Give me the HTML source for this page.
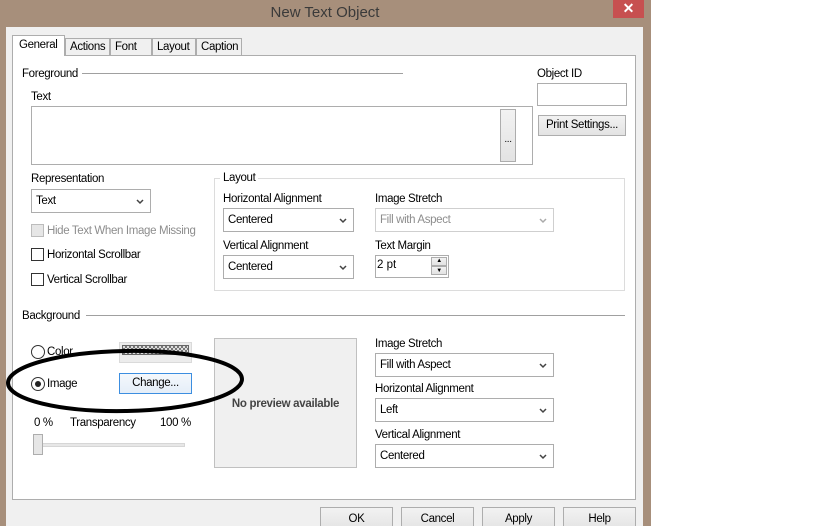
<!DOCTYPE html>
<html><head><meta charset="utf-8"><style>
*{margin:0;padding:0;box-sizing:border-box}
html,body{width:819px;height:526px;overflow:hidden}
body{background:#fff;font-family:"Liberation Sans",sans-serif;font-size:11.5px;color:#000;position:relative}
.a{position:absolute}
.lbl{position:absolute;line-height:14px;white-space:nowrap;letter-spacing:-0.35px}
.cb{position:absolute;background:#fff;border:1px solid #adadad;height:24px;line-height:22px;padding-left:4px;letter-spacing:-0.35px}
.cb svg{position:absolute;right:6px;top:9px}
.btn{position:absolute;background:linear-gradient(#f2f2f2,#e3e3e3);border:1px solid #adadad;text-align:center;line-height:18px;letter-spacing:-0.35px}
.chk{position:absolute;width:13px;height:13px;border:1px solid #333;background:#fff}
.rad{position:absolute;width:14px;height:14px;border:1px solid #333;border-radius:50%;background:#fff}
.tab{position:absolute;top:38px;height:18px;background:#f0f0f0;border:1px solid #adadad;border-bottom:none;line-height:16px;padding-left:4px;letter-spacing:-0.35px}
</style></head><body>
<div class="a" style="left:0;top:0;width:651px;height:526px;background:#a78f7b"></div>
<div class="lbl" style="left:240px;top:4px;width:170px;text-align:center;font-size:15px;line-height:18px;color:#3a3a3a;letter-spacing:0">New Text Object</div>
<div class="a" style="left:613px;top:0;width:31px;height:18px;background:#c75050;color:#fff;text-align:center;font-size:14px;line-height:17px;font-weight:bold">✕</div>
<div class="a" style="left:6px;top:27px;width:637px;height:499px;background:#f0f0f0"></div>
<div class="tab" style="left:65px;width:45px">Actions</div>
<div class="tab" style="left:110px;width:42px">Font</div>
<div class="tab" style="left:152px;width:44px">Layout</div>
<div class="tab" style="left:196px;width:46px">Caption</div>
<div class="a" style="left:12px;top:55px;width:624px;height:445px;background:#fff;border:1px solid #adadad"></div>
<div class="tab" style="left:12px;top:35px;width:53px;height:21px;background:#fff;padding-left:6px;line-height:18px">General</div>
<div class="lbl" style="left:22px;top:67px">Foreground</div>
<div class="a" style="left:82px;top:73px;width:321px;height:1px;background:#a0a0a0"></div>
<div class="lbl" style="left:31px;top:90px">Text</div>
<div class="a" style="left:31px;top:106px;width:502px;height:59px;border:1px solid #adadad;background:#fff"></div>
<div class="btn" style="left:500px;top:109px;width:16px;height:53px;line-height:60px;font-size:10px">...</div>
<div class="lbl" style="left:537px;top:67px">Object ID</div>
<div class="a" style="left:537px;top:83px;width:90px;height:23px;border:1px solid #adadad;background:#fff"></div>
<div class="btn" style="left:538px;top:115px;width:88px;height:21px">Print Settings...</div>
<div class="lbl" style="left:31px;top:172px">Representation</div>
<div class="cb" style="left:31px;top:189px;width:120px">Text<svg width="8" height="6"><path d="M1 1l3 3 3-3" stroke="#444" stroke-width="1.5" fill="none"/></svg></div>
<div class="chk" style="left:31px;top:224px;background:#e6e6e6;border-color:#bcbcbc"></div>
<div class="lbl" style="left:47px;top:224px;color:#8d8d8d">Hide Text When Image Missing</div>
<div class="chk" style="left:31px;top:248px"></div>
<div class="lbl" style="left:47px;top:248px">Horizontal Scrollbar</div>
<div class="chk" style="left:31px;top:273px"></div>
<div class="lbl" style="left:47px;top:273px">Vertical Scrollbar</div>
<div class="a" style="left:214px;top:178px;width:411px;height:113px;border:1px solid #dcdcdc"></div>
<div class="lbl" style="left:220px;top:171px;background:#fff;padding:0 3px">Layout</div>
<div class="lbl" style="left:223px;top:192px">Horizontal Alignment</div>
<div class="cb" style="left:223px;top:208px;width:131px">Centered<svg width="8" height="6"><path d="M1 1l3 3 3-3" stroke="#444" stroke-width="1.5" fill="none"/></svg></div>
<div class="lbl" style="left:375px;top:192px">Image Stretch</div>
<div class="cb" style="left:375px;top:208px;width:179px;border-color:#cfcfcf;color:#8d8d8d">Fill with Aspect<svg width="8" height="6"><path d="M1 1l3 3 3-3" stroke="#aaa" stroke-width="1.5" fill="none"/></svg></div>
<div class="lbl" style="left:223px;top:239px">Vertical Alignment</div>
<div class="cb" style="left:223px;top:255px;width:131px">Centered<svg width="8" height="6"><path d="M1 1l3 3 3-3" stroke="#444" stroke-width="1.5" fill="none"/></svg></div>
<div class="lbl" style="left:375px;top:239px">Text Margin</div>
<div class="a" style="left:375px;top:255px;width:74px;height:23px;border:1px solid #adadad;background:#fff;padding-left:1px;line-height:18px">2 pt</div>
<div class="btn" style="left:431px;top:257px;width:16px;height:9px;font-size:6px;line-height:7px">▲</div>
<div class="btn" style="left:431px;top:266px;width:16px;height:9px;font-size:6px;line-height:8px">▼</div>
<div class="lbl" style="left:22px;top:309px">Background</div>
<div class="a" style="left:86px;top:315px;width:539px;height:1px;background:#a0a0a0"></div>
<div class="rad" style="left:31px;top:345px"></div>
<div class="lbl" style="left:47px;top:345px">Color</div>
<div class="a" style="left:119px;top:342px;width:73px;height:21px;border:1px solid #dadada;background:#ececec;padding:2px"><div style="width:100%;height:10px;border:1px solid #666;background:repeating-conic-gradient(#777 0 25%,#ddd 0 50%) 0 0/4px 4px"></div></div>
<div class="rad" style="left:31px;top:377px"><div style="position:absolute;left:3px;top:3px;width:6px;height:6px;border-radius:50%;background:#222"></div></div>
<div class="lbl" style="left:47px;top:377px">Image</div>
<div class="btn" style="left:119px;top:373px;width:73px;height:21px;border-color:#3c8ee0;background:linear-gradient(#f4f8fc,#e5eef8)">Change...</div>
<div class="lbl" style="left:34px;top:416px">0 %</div>
<div class="lbl" style="left:70px;top:416px">Transparency</div>
<div class="lbl" style="left:160px;top:416px">100 %</div>
<div class="a" style="left:40px;top:443px;width:145px;height:4px;background:#e7e7e7;border:1px solid #d6d6d6"></div>
<div class="a" style="left:33px;top:434px;width:10px;height:21px;background:#e6e6e6;border:1px solid #adadad"></div>
<div class="a" style="left:214px;top:338px;width:143px;height:130px;background:#f0f0f0;border:1px solid #c0c0c0;text-align:center;line-height:130px;font-weight:bold;color:#444;font-size:11.5px;letter-spacing:-0.3px">No preview available</div>
<div class="lbl" style="left:375px;top:337px">Image Stretch</div>
<div class="cb" style="left:375px;top:353px;width:179px">Fill with Aspect<svg width="8" height="6"><path d="M1 1l3 3 3-3" stroke="#444" stroke-width="1.5" fill="none"/></svg></div>
<div class="lbl" style="left:375px;top:382px">Horizontal Alignment</div>
<div class="cb" style="left:375px;top:398px;width:179px">Left<svg width="8" height="6"><path d="M1 1l3 3 3-3" stroke="#444" stroke-width="1.5" fill="none"/></svg></div>
<div class="lbl" style="left:375px;top:428px">Vertical Alignment</div>
<div class="cb" style="left:375px;top:444px;width:179px">Centered<svg width="8" height="6"><path d="M1 1l3 3 3-3" stroke="#444" stroke-width="1.5" fill="none"/></svg></div>
<div class="btn" style="left:320px;top:507px;width:73px;height:24px;line-height:22px">OK</div>
<div class="btn" style="left:401px;top:507px;width:73px;height:24px;line-height:22px">Cancel</div>
<div class="btn" style="left:482px;top:507px;width:73px;height:24px;line-height:22px">Apply</div>
<div class="btn" style="left:563px;top:507px;width:73px;height:24px;line-height:22px">Help</div>
<svg class="a" style="left:0;top:0" width="819" height="526"><ellipse cx="125" cy="381" rx="117" ry="30" fill="none" stroke="#000" stroke-width="4" transform="rotate(-1 125 381)"/></svg>
</body></html>
